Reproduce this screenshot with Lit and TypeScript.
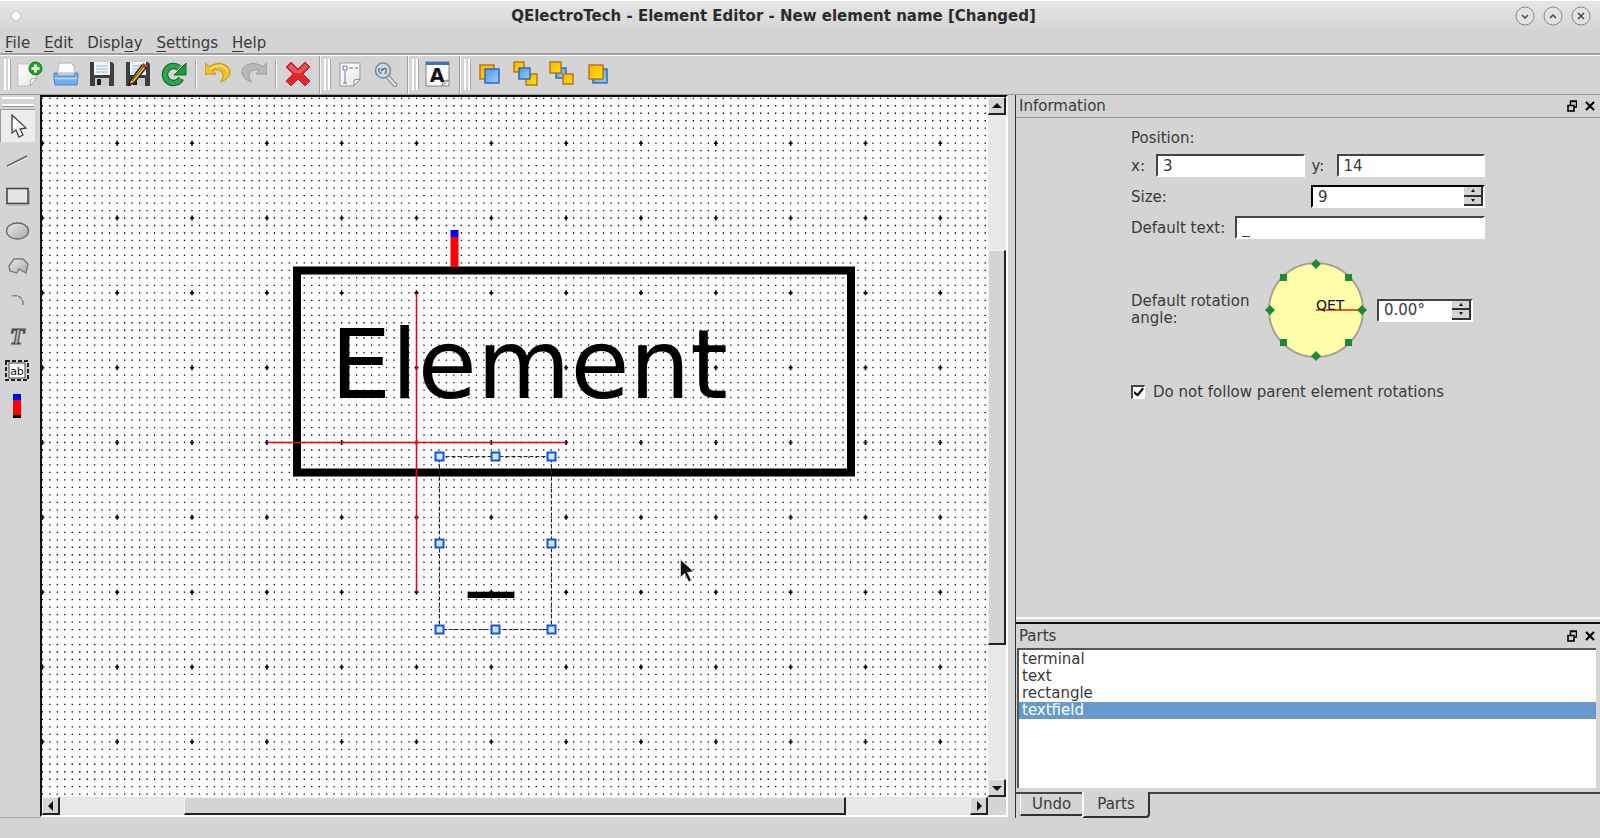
import { LitElement, html, svg, css, TemplateResult, SVGTemplateResult } from "lit";
import { customElement, state } from "lit/decorators.js";
import { classMap } from "lit/directives/class-map.js";

const STEP = 7.483;

const diskette = svg`
  <path d="M1 1h22l2 2v22H1z" fill="#3b3f42"/>
  <rect x="5" y="1" width="16" height="13" fill="#f4f8fb"/>
  <path d="M7 5h12M7 8h12M7 11h12" stroke="#a9cbe6" stroke-width="1.4"/>
  <rect x="6" y="17" width="14" height="8" fill="#c9ccce"/>
  <rect x="8" y="18" width="4" height="6" fill="#222"/>`;

const square = (x: number, y: number, s: number, blue = false) => svg`
  <rect x=${x} y=${y} width=${s} height=${s} fill=${blue ? "url(#blue)" : "url(#gold)"}
    stroke=${blue ? "#2060a8" : "#b06a10"} stroke-width="1.3"/>`;

const defs = svg`<defs>
  <linearGradient id="gold" x1="0" y1="0" x2="1" y2="1"><stop offset="0" stop-color="#ffb300"/><stop offset="1" stop-color="#ffe100"/></linearGradient>
  <linearGradient id="blue" x1="0" y1="0" x2="1" y2="1"><stop offset="0" stop-color="#4e98ee"/><stop offset="1" stop-color="#9cccfb"/></linearGradient>
  <linearGradient id="paper" x1="0" y1="0" x2="1" y2="1"><stop offset="0" stop-color="#fff"/><stop offset="1" stop-color="#e6e6e6"/></linearGradient>
  <linearGradient id="grey" x1="0" y1="0" x2="1" y2="1"><stop offset="0" stop-color="#ececec"/><stop offset="1" stop-color="#a8a8a8"/></linearGradient>
</defs>`;

const icons: Record<string, SVGTemplateResult> = {
  new: svg`<path d="M1 3h19v14l-7 8H1z" fill="url(#paper)" stroke="#b9b9b9" stroke-width=".8"/>
    <path d="M13 25l1-7 6-1z" fill="#fff" stroke="#999" stroke-width=".8"/>
    <circle cx="18.500" cy="7.500" r="6.500" fill="#21a321" stroke="#0d7a12"/>
    <path d="M18.500 3.500v8M14.500 7.500h8" stroke="#fff" stroke-width="2.600"/>`,
  open: svg`<path d="M4.500 12L6 2h12l3 3 1 7z" fill="#fbfcfd" stroke="#a9b4c2"/>
    <path d="M1 12h3l1 3h16l1-3h3v4l-1 8H2l-1-8z" fill="#72aef0" stroke="#4f86c8"/>
    <path d="M2 17.500h22" stroke="#b8d9fa" stroke-width="1.500"/>`,
  save: diskette,
  saveas: svg`${diskette}<path d="M5 20L17 4l4 3L9 22l-5 2z" fill="#f3b51c" stroke="#222" stroke-width="1.400"/>
    <path d="M17 4l1.500-2 4 3L21 7z" fill="#d9322b"/><path d="M7 20L19 5" stroke="#5b4200" stroke-width="1"/>`,
  reload: svg`<path d="M20 17.500A8.500 8.500 0 1 1 18 7" fill="none" stroke="#0c6626" stroke-width="6.500"/>
    <path d="M25 2v12H13z" fill="#1c9a3c" stroke="#0c6626"/>
    <path d="M20 17.500A8.500 8.500 0 1 1 18 7" fill="none" stroke="#2da54a" stroke-width="4.500"/>`,
  undo: svg`<path d="M0 2v11h11l-3.500-3.500c5-2 10 0 10.500 4 .3 3-1 5-2.500 7.500 6-2 10-6 9.500-10.500C24.500 3.500 14-.500 4 5.500z" fill="#f5be22" stroke="#c98d0a"/>
    <path d="M5 8c8-6 16-3 17.500 3" fill="none" stroke="#fde48a" stroke-width="1.500"/>`,
  redo: svg`<path d="M26 2v11H15l3.500-3.500c-5-2-10 0-10.500 4-.3 3 1 5 2.500 7.500-6-2-10-6-9.500-10.500C1.500 3.500 12-.500 22 5.500z" fill="#b8b8b8" stroke="#999"/>`,
  delete: svg`<path d="M6 1l7 7 7-7 5 5-7 7 7 7-5 5-7-7-7 7-5-5 7-7-7-7z" fill="#de2a2e" stroke="#b82a2a"/>
    <path d="M6 3l7 7 7-7 3 3-7 6H10L3 6z" fill="#f07070" opacity=".7"/>`,
  page: svg`<path d="M3 2h20v16l-6 7H3z" fill="url(#paper)" stroke="#9a9a9a"/>
    <path d="M17 25v-6l6-1z" fill="#fff" stroke="#8a8a8a"/>
    <path d="M6 5h4v4H6zM12 7h4M18 7h3M8 10v12" fill="none" stroke="#6878a0"/><path d="M6 22h4" stroke="#6878a0"/>`,
  zoom: svg`<path d="M15 16l7 8" stroke="#888" stroke-width="4.500" stroke-linecap="round"/>
    <path d="M15 16l7 8" stroke="#e3e3e3" stroke-width="2.500" stroke-linecap="round"/>
    <circle cx="10" cy="9.500" r="7.500" fill="#c9dcea" stroke="#7c8a94" stroke-width="1.500"/>
    <path d="M6 7v4M8 8h2M13 7v4M6 12h3M11 12h3M8 10l4-3" stroke="#4d6274" stroke-width="1.200"/>`,
  letter: svg`<rect x="1" y="1" width="23" height="24" fill="#fdfdfd" stroke="#808080"/>
    <path d="M1 1h23v3H1z" fill="#3d70c0"/>
    <path d="M17 25l1-5 6-1z" fill="#ddd" stroke="#888"/>
    <text x="12" y="21" text-anchor="middle" font-family="DejaVu Sans" font-weight="bold" font-size="19" fill="#111">A</text>`,
  front: svg`${square(3, 4, 14)}${square(8, 8, 14, true)}`,
  raise: svg`${square(1, 1, 10)}${square(13, 13, 11)}${square(6, 7, 11, true)}`,
  lower: svg`${square(7, 7, 10, true)}${square(1, 1, 11)}${square(14, 13, 10)}`,
  back: svg`${square(8, 8, 14, true)}${square(4, 4, 14)}`,
  pointer: svg`<path d="M8 2v18l4-3 3 7 4-2-3-6 6-1z" fill="#fff" stroke="#444" stroke-width="1.300"/>`,
  line: svg`<path d="M3 18L23 8" stroke="#666" stroke-width="1.400"/><path d="M4 19L23 10" stroke="#f2f2f2"/>`,
  rect: svg`<rect x="3" y="5.500" width="21" height="15" fill="#e4e4e4" stroke="#444" stroke-width="1.600"/>
    <path d="M4 22h21.500V8" fill="none" stroke="#aaa"/>`,
  ellipse: svg`<ellipse cx="13.500" cy="13" rx="11" ry="8" fill="url(#grey)" stroke="#666" stroke-width="1.300"/>`,
  polygon: svg`<path d="M5 13l5-7h9l5 5-2 9-7-4-2 4-7-2z" fill="url(#grey)" stroke="#777" stroke-width="1.300"/>`,
  arc: svg`<path d="M8 8c7-2 12 3 11 9" fill="none" stroke="#777" stroke-width="1.300" stroke-dasharray="5 1"/>`,
  text: svg`<text x="13" y="21" text-anchor="middle" font-family="Liberation Serif" font-style="italic" font-weight="bold" font-size="24" fill="#b4b4b4" stroke="#4c4c4c" stroke-width="1.200">T</text>`,
  field: svg`<rect x="2" y="3" width="22" height="19" fill="none" stroke="#222" stroke-width="2" stroke-dasharray="4 2"/>
    <rect x="5" y="5" width="16" height="15" fill="#fff" stroke="#444"/>
    <text x="13" y="17" text-anchor="middle" font-family="DejaVu Sans" font-size="11" fill="#111">ab</text>`,
  terminal: svg`<rect x="9" y="1" width="8" height="6" fill="#00f"/><rect x="9" y="7" width="8" height="15" fill="#f00"/><rect x="9" y="22" width="8" height="3" fill="#000"/>`,
};

const icon = (name: string) => html`<svg class="icon" viewBox="0 0 26 26" aria-hidden="true">${defs}${icons[name]}</svg>`;

const DRAW_TOOLS = [
  ["pointer", "Select"], ["line", "Line"], ["rect", "Rectangle"], ["ellipse", "Ellipse"], ["polygon", "Polygon"],
  ["arc", "Arc"], ["text", "Text"], ["field", "Text field"], ["terminal", "Terminal"],
];

@customElement("app-root")
export class AppRoot extends LitElement {
  @state() private tool = "pointer";
  @state() private part = "textfield";
  @state() private size = 9;

  static styles = css`
    :host {
      display: flex;
      flex-direction: column;
      height: 100vh;
      overflow: hidden;
      background: #d4d4d4;
      color: #3a3a3a;
      font: 15px/18px "DejaVu Sans", sans-serif;
    }
    * { box-sizing: border-box; }
    button, input { font: inherit; color: inherit; margin: 0; padding: 0; border-radius: 0; outline: none; }
    button { background: none; border: 0; }
    svg { display: block; }

    .title {
      display: grid;
      grid-template-columns: 1fr auto 1fr;
      align-items: center;
      height: 32px;
      padding: 0 9px 2px 12px;
      border-top: 1px solid #fff;
      background: linear-gradient(#e6e6e6, #d4d4d4);
    }
    .title h1 { margin: 0 56px 0 0; font-size: 15px; font-weight: bold; color: #2b2b2b; white-space: nowrap; }
    .dot { width: 8px; height: 8px; border-radius: 50%; background: #fafafa; box-shadow: 0 0 2px #999; }
    .wm { display: flex; gap: 8px; justify-content: flex-end; }
    .wm button { width: 20px; height: 20px; }

    .menu { display: flex; gap: 14px; height: 23px; padding: 2px 5px 0; border-bottom: 2px solid #a2a2a2; }
    .menu a { color: inherit; text-decoration: none; }
    .menu u { text-underline-offset: 3px; }

    .bars { display: flex; height: 39px; border-top: 1px solid #fafafa; }
    .bar { display: flex; align-items: center; gap: 10px; padding: 0 8px 2px 4px; border-right: 1px solid #a0a0a0; box-shadow: 1px 0 #f6f6f6; }
    .bar:last-child { border: 0; box-shadow: none; }
    .grip { width: 6px; height: 31px; margin-right: -3px; border: solid #fff; border-width: 0 2px; box-shadow: 1px 0 #aaa; }
    .sep { width: 2px; height: 30px; background: #a9a9a9; border-right: 1px solid #fff; margin: 0 -2px; }
    .icon { width: 26px; height: 26px; }

    main { flex: 1; min-height: 0; display: flex; border-top: 1px solid #9b9b9b; }
    .tools { flex: none; width: 40px; padding-top: 2px; display: flex; flex-direction: column; gap: 2px; border-bottom: 1px solid #aaa; }
    .tools .handle { width: 32px; height: 9px; margin: 0 0 1px 2px; border: solid #fff; border-width: 2px 0; box-shadow: 0 1px #999; }
    .tools button { width: 35px; height: 33px; padding: 3px 4px; }
    .tools button.on { background: #ececec; border-top: 1px solid #999; border-left: 1px solid #999; padding: 2px 4px 2px 3px; }

    .view {
      flex: 1;
      min-width: 0;
      display: grid;
      grid-template: minmax(0, 1fr) 18px / minmax(0, 1fr) 18px;
      margin: 0 7px 1px 0;
      border: 2px solid #fff;
      border-top-color: #111;
      border-left-color: #111;
    }
    .sheet { width: 100%; height: 100%; background: #fff; }
    .scroll { display: flex; background: #e8e8e8; }
    .scroll.v { flex-direction: column; }
    .scroll button, .thumb { background: #d4d4d4; border: 1px solid #f4f4f4; border-right: 2px solid #222; border-bottom: 2px solid #222; }
    .scroll button { flex: none; width: 18px; height: 18px; display: grid; place-items: center; }
    .before-v { flex: 135; }
    .thumb-v { flex: 394; }
    .after-v { flex: 134; }
    .before-h { flex: 124; }
    .thumb-h { flex: 662; }
    .after-h { flex: 124; }

    aside { flex: none; width: calc(36.5% + 1px); display: flex; flex-direction: column; border-left: 1px solid #333; }
    .dock-title { display: flex; align-items: center; gap: 8px; height: 23px; padding: 0 5px 1px 3px; border-bottom: 1px solid #9b9b9b; }
    .dock-title h2 { flex: 1; margin: 0; font: inherit; }
    .dock-title button { width: 10px; height: 12px; }
    .info { flex: 1; min-height: 0; display: flex; flex-direction: column; }
    .form { width: 354px; margin: 11px auto 0; display: flex; flex-direction: column; gap: 8px; }
    .row { display: flex; align-items: center; }
    .row.pair { display: grid; grid-template-columns: 25px 1fr 32px 1fr; margin-top: -1px; }
    .row.pair label + input + label { padding-left: 7px; }
    .row.spread { justify-content: space-between; }
    .form input[type="text"], .spin {
      height: 23px;
      min-width: 0;
      background: #fff;
      border: 2px solid #fff;
      border-top-color: #444;
      border-left-color: #444;
      padding: 0 5px;
    }
    .long { width: 250px; }
    .spin { display: flex; padding: 0; }
    .spin input[type="text"] { flex: 1; height: 19px; border: 0; background: none; }
    .spin div { width: 19px; display: grid; grid-template-rows: 1fr 1fr; }
    .spin button { display: grid; place-items: center; background: #d4d4d4; border-right: 2px solid #333; border-bottom: 2px solid #333; }
    .spin-size { width: 174px; border-top-color: #000; border-left-color: #000; }
    .spin-angle { width: 96px; }
    .rotation { display: grid; grid-template-columns: 127px 109px 96px; gap: 5px; margin-top: 15px; line-height: 17px; }
    .check { gap: 8px; margin-top: 17px; white-space: nowrap; }
    .check input {
      appearance: none;
      flex: none;
      width: 14px;
      height: 14px;
      background: #fff;
      border: 1px solid #fff;
      border-top: 2px solid #444;
      border-left: 2px solid #444;
    }
    .check input:checked::before {
      content: "";
      display: block;
      height: 10px;
      background: #000;
      clip-path: polygon(10% 40%, 40% 65%, 85% 5%, 100% 20%, 45% 95%, 10% 70%);
    }
    .split { height: 7px; border-top: 2px solid #fafafa; border-bottom: 2px solid #111; }
    .parts { flex: 0 0 168px; display: flex; flex-direction: column; }
    .parts .dock-title { height: 24px; border-bottom: 0; }
    .parts ul {
      flex: 1;
      margin: 0 4px 4px 1px;
      padding: 1px 0 0;
      list-style: none;
      background: #fff;
      border-top: 2px solid #555;
      border-left: 2px solid #555;
    }
    .parts li button { display: block; width: 100%; height: 17px; line-height: 17px; padding: 0 3px; text-align: left; }
    .parts li button.on { background: #6699cc; color: #fff; }
    .tabs { display: flex; align-items: flex-start; height: 26px; border-top: 2px solid #444; padding-left: 4px; }
    .tabs button { height: 22px; width: 62px; border-bottom: 2px solid #333; border-left: 1px solid #fff; }
    .tabs button.on { position: relative; top: -2px; height: 26px; width: 68px; background: #d4d4d4; border-right: 2px solid #333; border-left: 2px solid #fff; border-bottom-right-radius: 4px; }
    footer { flex: none; height: 20px; }
  `;

  private wmButton(label: string, d: string) {
    return html`<button aria-label=${label}><svg viewBox="0 0 20 20">
      <circle cx="10" cy="10" r="9" fill="#e2e2e2" stroke="#888"/>
      <path d=${d} fill="none" stroke="#444" stroke-width="1.5"/></svg></button>`;
  }

  private tools(names: string[]) {
    return names.map((n) => (n === "|" ? html`<span class="sep"></span>` : html`<button aria-label=${n}>${icon(n)}</button>`));
  }

  private dockTitle(text: string) {
    return html`<div class="dock-title"><h2>${text}</h2>
      <button aria-label="Float ${text}"><svg viewBox="0 0 10 12"><path d="M3.5 5V1h6v6H7M3 1.500h7" fill="none" stroke="#000" stroke-width="1.4"/><rect x="1" y="5.500" width="6" height="5.500" fill="none" stroke="#000" stroke-width="1.600"/></svg></button>
      <button aria-label="Close ${text}"><svg viewBox="0 0 10 12"><path d="M1 2l8 8M9 2l-8 8" stroke="#000" stroke-width="2.200"/></svg></button>
    </div>`;
  }

  private arrow(label: string, d: string) {
    return html`<button aria-label=${label}><svg width="10" height="10" viewBox="0 0 10 10"><path d=${d} fill="#111"/></svg></button>`;
  }

  private spin(id: string, value: string, kind: string, step: (by: number) => void): TemplateResult {
    const a = (by: number, d: string) => html`<button aria-label=${by > 0 ? "Increase" : "Decrease"} @click=${() => step(by)}>
      <svg width="4" height="3" viewBox="0 0 4 3"><path d=${d} fill="#111"/></svg></button>`;
    return html`<div class="spin ${kind}"><input id=${id} type="text" .value=${value} size="4" />
      <div>${a(1, "M0 3l2-3 2 3z")}${a(-1, "M0 0l2 3 2-3z")}</div></div>`;
  }

  private grid() {
    const rows: SVGTemplateResult[] = [];
    for (let r = -50; r < 200; r++) {
      const y = r * STEP;
      rows.push(svg`<path d="M${-50 * STEP - 0.65} ${y}H4000" stroke="#000" stroke-width="1.3" stroke-dasharray="1.300 ${STEP - 1.3}"/>`);
      if (r % 10 === 0) {
        rows.push(svg`<path d="M${-50 * STEP - 2} ${y}H4000" stroke="#000" stroke-width="1.600" stroke-dasharray="4 ${10 * STEP - 4}"/>
          <path d="M${-50 * STEP - 0.8} ${y}H4000" stroke="#000" stroke-width="5" stroke-dasharray="1.600 ${10 * STEP - 1.6}"/>`);
      }
    }
    return rows;
  }

  private sheet() {
    const handles = [[23, 14], [79, 14], [135, 14], [23, 101], [135, 101], [23, 187], [79, 187], [135, 187]];
    return html`<svg class="sheet" role="img" aria-label="Element drawing">
      <g transform="translate(374.5 345.5)">
        ${this.grid()}
        ${svg`<rect x="-119.500" y="-172" width="554" height="202" fill="none" stroke="#000" stroke-width="8"/>
        <rect x="34" y="-212.500" width="8" height="7" fill="#00f"/>
        <rect x="34" y="-205.500" width="8" height="30" fill="#f00"/>
        <text x="-86" y="-45" font-family="DejaVu Sans" font-size="96" fill="#000">Element</text>
        <text x="52" y="134" font-family="DejaVu Sans" font-size="90" fill="#000">_</text>
        <path d="M-149 0H150M0-149V149" stroke="#f00010" stroke-width="1.500"/>
        <path d="M23 14H135V187H23Z" fill="none" stroke="#222" stroke-dasharray="4 2"/>
        ${handles.map(([x, y]) => svg`<rect x=${x - 4} y=${y - 4} width="8" height="8" fill="#cdeaff" stroke="#1450ee" stroke-width="2"/>`)}
        <path d="M264 117v18l4-4 4 8 3-1-4-8 6-1z" fill="#111" stroke="#ddd" stroke-width=".8"/>`}
      </g>
    </svg>`;
  }

  private dial() {
    const marks = [0, 1, 2, 3, 4, 5, 6, 7].map((i) => {
      const a = (i * Math.PI) / 4;
      const x = 53 + 46 * Math.cos(a);
      const y = 48 + 46 * Math.sin(a);
      return i % 2
        ? svg`<rect x=${x - 3.5} y=${y - 3.5} width="7" height="7" fill="#1f8a36"/>`
        : svg`<path d="M${x - 5} ${y}l5-5 5 5-5 5z" fill="#1f8a36"/>`;
    });
    return html`<svg width="106" height="96" overflow="visible" role="img" aria-label="Rotation dial">
      <circle cx="53" cy="48" r="47" fill="#ffffaa" stroke="#a8a290" stroke-width="2"/>
      <path d="M53 48h46" stroke="#ee5533" stroke-width="2"/>
      <text x="53" y="48" font-family="DejaVu Sans" font-size="14" fill="#111">QET</text>${marks}</svg>`;
  }

  render() {
    return html`
      <header class="title">
        <span class="dot"></span>
        <h1>QElectroTech - Element Editor - New element name [Changed]</h1>
        <div class="wm">
          ${this.wmButton("Minimise", "M7 9l3 3 3-3")}${this.wmButton("Maximise", "M7 12l3-3 3 3")}${this.wmButton("Close", "M7 7l6 6M13 7l-6 6")}
        </div>
      </header>
      <nav class="menu">
        <a href="#file"><u>F</u>ile</a><a href="#edit"><u>E</u>dit</a><a href="#display">Displ<u>a</u>y</a>
        <a href="#settings"><u>S</u>ettings</a><a href="#help"><u>H</u>elp</a>
      </nav>
      <div class="bars">
        <div class="bar"><span class="grip"></span>${this.tools(["new", "open", "save", "saveas", "reload", "|", "undo", "redo", "|", "delete"])}</div>
        <div class="bar"><span class="grip"></span>${this.tools(["page", "zoom"])}</div>
        <div class="bar"><span class="grip"></span>${this.tools(["letter"])}</div>
        <div class="bar"><span class="grip"></span>${this.tools(["front", "raise", "lower", "back"])}</div>
      </div>
      <main>
        <div class="tools">
          <span class="handle"></span>
          ${DRAW_TOOLS.map(([id, label]) => html`<button aria-label=${label} class=${classMap({ on: this.tool === id })}
            @click=${() => (this.tool = id)}>${icon(id)}</button>`)}
        </div>
        <div class="view">
          ${this.sheet()}
          <div class="scroll v">
            ${this.arrow("Scroll up", "M0 7l5-5 5 5z")}<span class="before-v"></span><span class="thumb thumb-v"></span><span class="after-v"></span>${this.arrow("Scroll down", "M0 3l5 5 5-5z")}
          </div>
          <div class="scroll h">
            ${this.arrow("Scroll left", "M7 0L2 5l5 5z")}<span class="before-h"></span><span class="thumb thumb-h"></span><span class="after-h"></span>${this.arrow("Scroll right", "M3 0l5 5-5 5z")}
          </div>
        </div>
        <aside>
          <section class="info">
            ${this.dockTitle("Information")}
            <div class="form">
              <div class="row">Position:</div>
              <div class="row pair">
                <label for="x">x:</label><input id="x" type="text" value="3" />
                <label for="y">y:</label><input id="y" type="text" value="14" />
              </div>
              <div class="row spread"><label for="size">Size:</label>
                ${this.spin("size", String(this.size), "spin-size", (by) => (this.size += by))}</div>
              <div class="row spread"><label for="text">Default text:</label><input class="long" id="text" type="text" value="_" /></div>
              <div class="row rotation"><label for="angle">Default rotation angle:</label>${this.dial()}
                ${this.spin("angle", "0.00°", "spin-angle", () => {})}</div>
              <label class="row check"><input type="checkbox" checked />Do not follow parent element rotations</label>
            </div>
          </section>
          <div class="split"></div>
          <section class="parts">
            ${this.dockTitle("Parts")}
            <ul>
              ${["terminal", "text", "rectangle", "textfield"].map((p) => html`<li><button class=${classMap({ on: this.part === p })}
                @click=${() => (this.part = p)}>${p}</button></li>`)}
            </ul>
          </section>
          <div class="tabs"><button>Undo</button><button class="on">Parts</button></div>
        </aside>
      </main>
      <footer></footer>
    `;
  }
}
